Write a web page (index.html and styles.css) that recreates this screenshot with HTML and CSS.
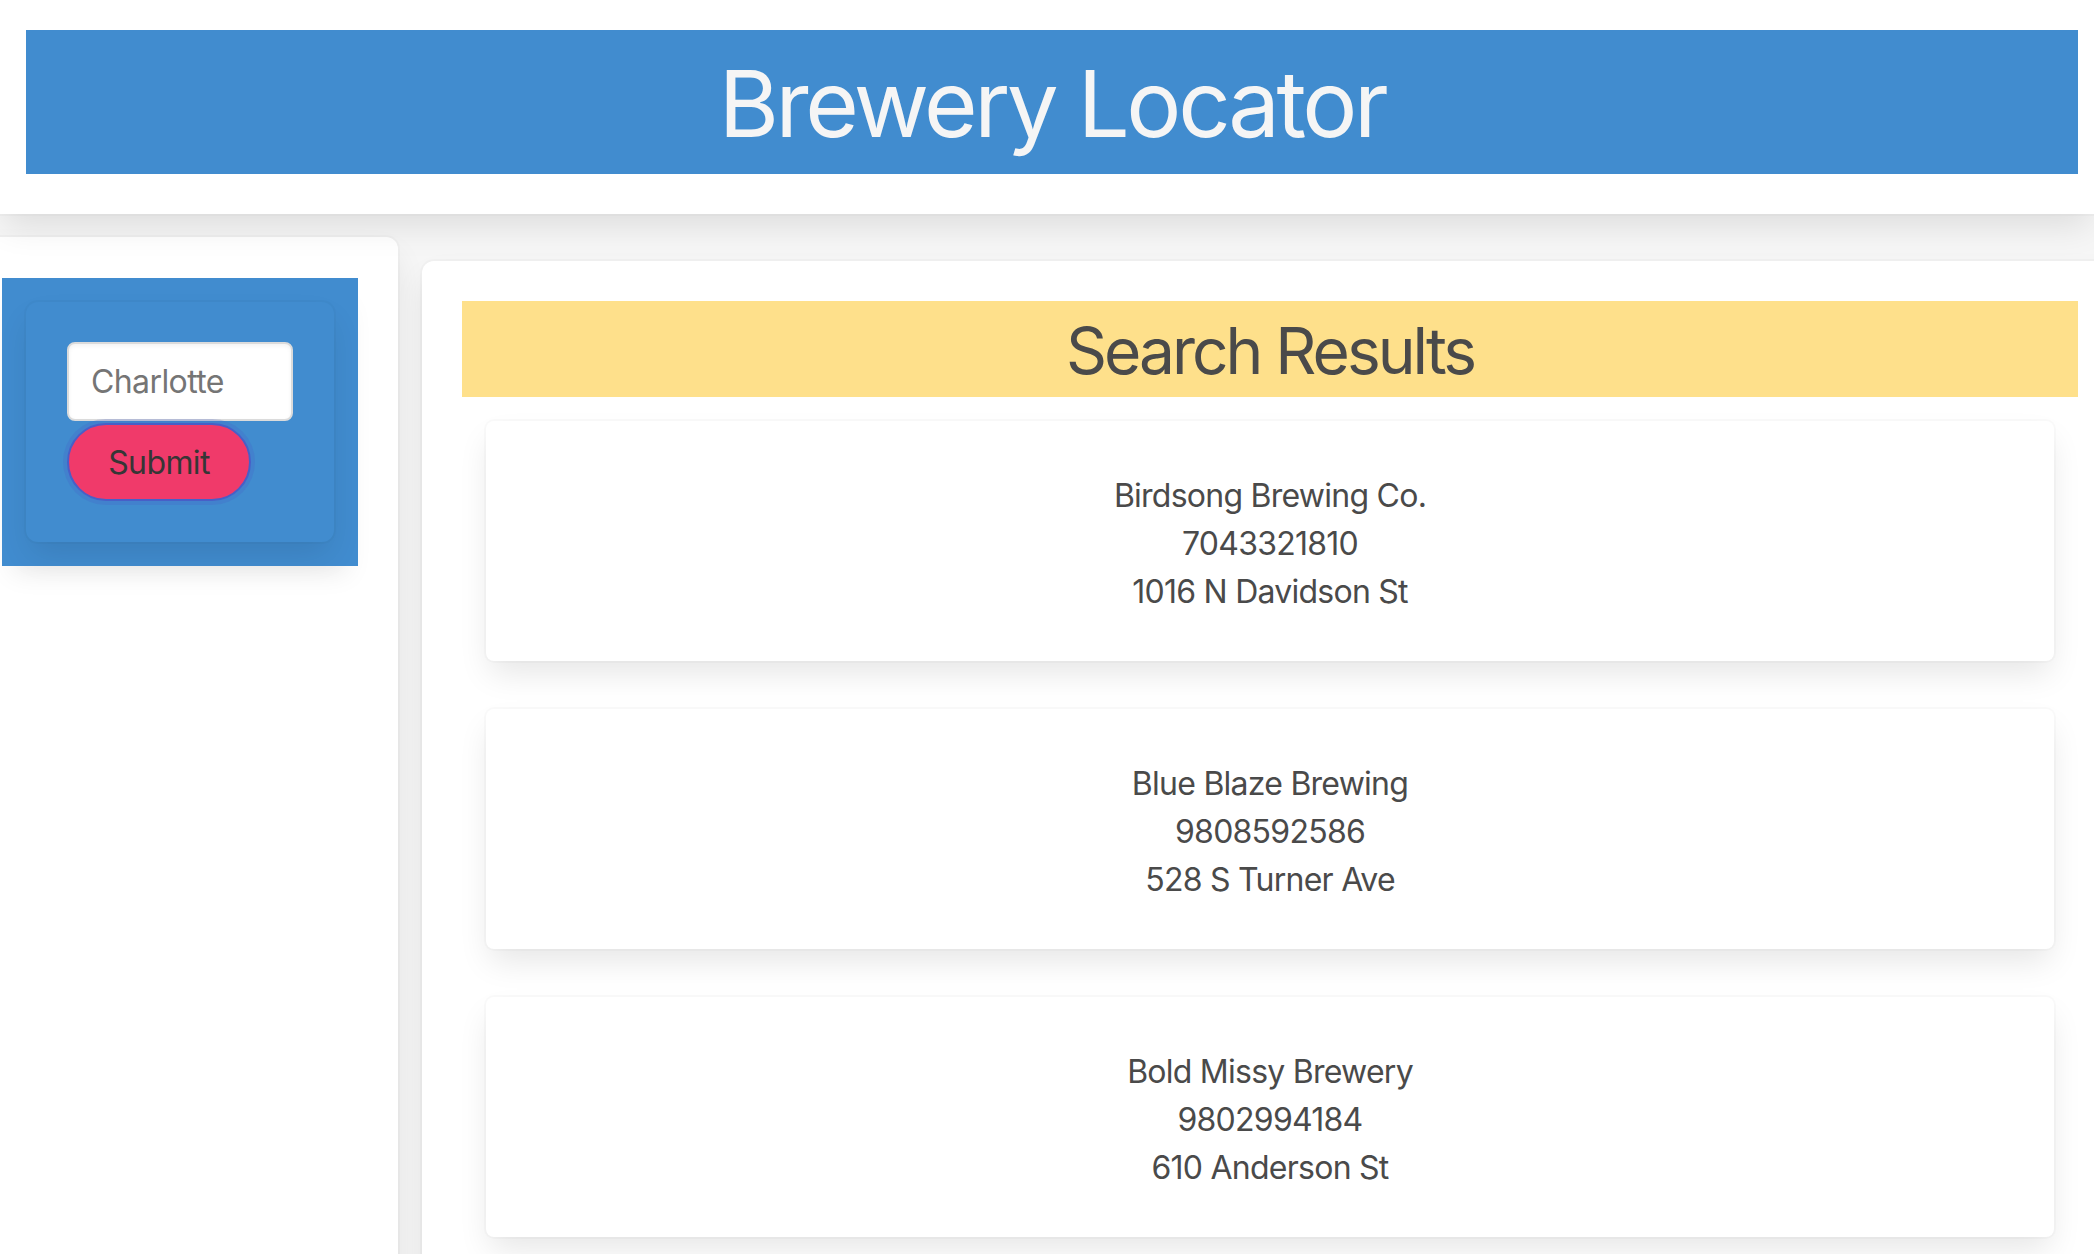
FILE: index.html
```html
<!DOCTYPE html>
<html lang="en">
<head>
<meta charset="utf-8">
<title>Brewery Locator</title>
<link rel="stylesheet" href="styles.css">
</head>
<body>
<header class="site-header">
  <div class="banner">
    <h1 class="banner-title">Brewery Locator</h1>
  </div>
</header>
<main class="layout">
  <aside class="panel panel-side">
    <div class="search-wrap">
      <form class="search-box" onsubmit="return false">
        <input class="search-input" type="text" value="Charlotte">
        <button class="search-btn" type="submit">Submit</button>
      </form>
    </div>
  </aside>
  <section class="panel panel-results">
    <h2 class="results-title">Search Results</h2>
    <div class="results-list">
      <article class="result-card">
        <p class="result-line">Birdsong Brewing Co.</p>
        <p class="result-line">7043321810</p>
        <p class="result-line">1016 N Davidson St</p>
      </article>
      <article class="result-card">
        <p class="result-line">Blue Blaze Brewing</p>
        <p class="result-line">9808592586</p>
        <p class="result-line">528 S Turner Ave</p>
      </article>
      <article class="result-card">
        <p class="result-line">Bold Missy Brewery</p>
        <p class="result-line">9802994184</p>
        <p class="result-line">610 Anderson St</p>
      </article>
    </div>
  </section>
</main>
</body>
</html>
```

FILE: styles.css
```css
html {
  overflow: hidden;
}

body {
  margin: 0;
  background: #f6f6f6;
  font-family: Inter, "Noto Sans", "Liberation Sans", sans-serif;
  color: #4a4a4a;
  overflow: hidden;
}

.site-header {
  position: relative;
  z-index: 2;
  background: #ffffff;
  padding: 30px 16px 40px 26px;
  box-shadow: 0 16px 32px -4px rgba(10, 10, 10, 0.1), 0 0 0 2px rgba(10, 10, 10, 0.02);
}

.banner {
  height: 144px;
  box-sizing: border-box;
  padding-top: 3px;
  background: #418ccf;
  display: flex;
  align-items: center;
  justify-content: center;
}

.banner-title {
  margin: 0;
  font-size: 92px;
  line-height: 141px;
  font-weight: 400;
  color: #f5f5f5;
  letter-spacing: -3.4px;
}

.layout {
  display: flex;
  align-items: flex-start;
  gap: 24px;
  margin-left: -38px;
  padding-top: 23px;
}

.panel {
  background: #ffffff;
  border-radius: 12px;
  padding: 40px;
  box-shadow: 0 16px 32px -4px rgba(10, 10, 10, 0.1), 0 0 0 2px rgba(10, 10, 10, 0.02);
  min-height: 1100px;
}

.panel-side {
  flex: 0 0 356px;
  padding-top: 41px;
}

.panel-results {
  flex: 0 0 1616px;
  margin-top: 24px;
}

.search-wrap {
  background: #418ccf;
  padding: 24px;
  box-shadow: 0 18px 24px -10px rgba(10, 10, 10, 0.08);
}

.search-box {
  background: #418ccf;
  border-radius: 12px;
  padding: 40px 41px 41px;
  display: flex;
  flex-direction: column;
  align-items: flex-start;
  gap: 2px;
  box-shadow: 0 16px 32px -4px rgba(10, 10, 10, 0.1), 0 0 0 2px rgba(10, 10, 10, 0.02);
}

.search-input {
  box-sizing: border-box;
  width: 226px;
  height: 79px;
  border: 2px solid #dbdbdb;
  border-radius: 8px;
  background: #ffffff;
  padding: 0 22px;
  font-family: inherit;
  font-size: 32px;
  letter-spacing: -0.6px;
  color: #757575;
  box-shadow: inset 0 2px 4px rgba(10, 10, 10, 0.05);
  outline: none;
}

.search-btn {
  box-sizing: border-box;
  width: 184px;
  height: 78px;
  border: 2px solid #485fc7;
  border-radius: 9999px;
  background: #f03a6a;
  color: #363636;
  font-family: inherit;
  font-size: 32px;
  letter-spacing: -0.6px;
  padding: 0;
  box-shadow: 0 0 0 4px rgba(72, 95, 199, 0.25);
  cursor: pointer;
}

.results-title {
  margin: 0;
  background: #fee08b;
  height: 96px;
  box-sizing: border-box;
  padding-top: 3px;
  font-size: 64px;
  line-height: 93px;
  font-weight: 400;
  text-align: center;
  color: #4a4a4a;
  letter-spacing: -3px;
}

.results-list {
  display: flex;
  flex-direction: column;
  gap: 48px;
  padding: 24px 24px 0;
}

.result-card {
  background: #ffffff;
  border-radius: 8px;
  padding: 51px 48px 45px;
  text-align: center;
  box-shadow: 0 16px 32px -4px rgba(10, 10, 10, 0.1), 0 0 0 2px rgba(10, 10, 10, 0.02);
}

.result-line {
  margin: 0;
  font-size: 32px;
  line-height: 48px;
  letter-spacing: -0.75px;
  color: #4a4a4a;
}
```
